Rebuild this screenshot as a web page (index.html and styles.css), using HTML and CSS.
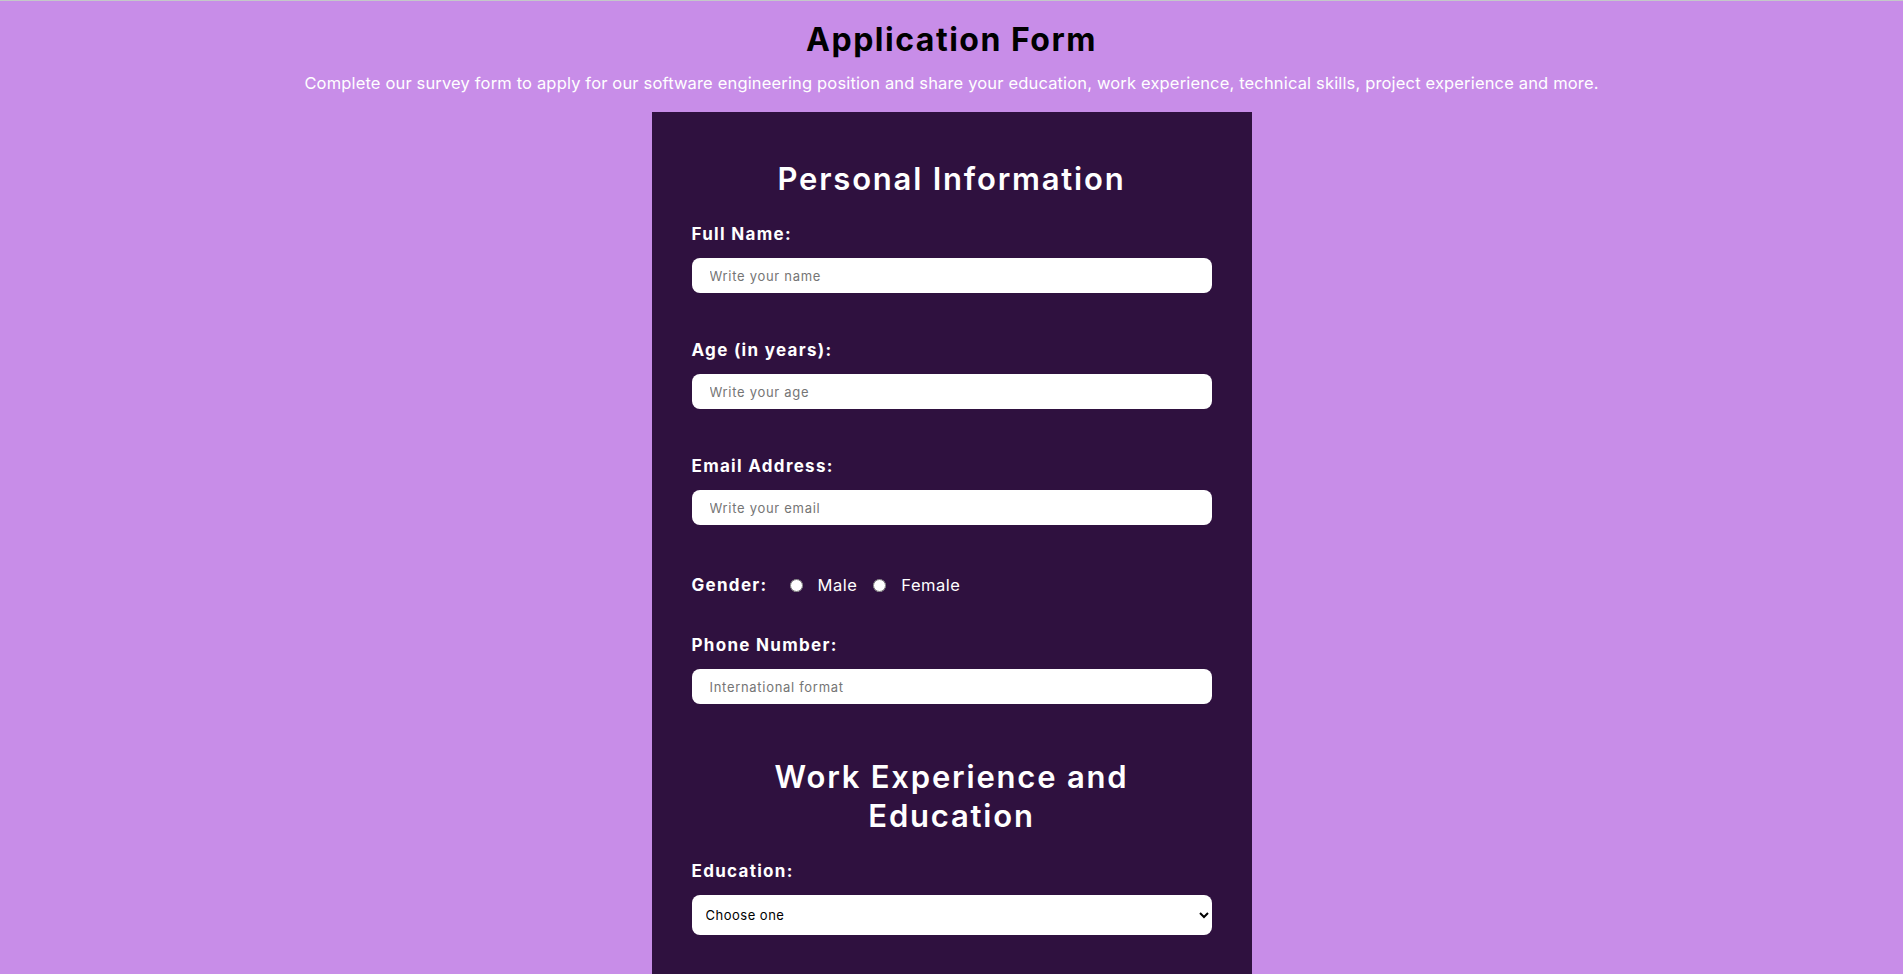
FILE: index.html
```html
<!DOCTYPE html>
<html lang="en">
<head>
<meta charset="utf-8">
<title>Application Form</title>
<link rel="stylesheet" href="styles.css">
</head>
<body>
<header class="page-header">
  <h1 class="title">Application Form</h1>
  <p class="subtitle">Complete our survey form to apply for our software engineering position and share your education, work experience, technical skills, project experience and more.</p>
</header>
<form class="card">
  <h2 class="section-title">Personal Information</h2>
  <div class="field">
    <label class="label" for="name">Full Name:</label>
    <input class="text-input" id="name" type="text" placeholder="Write your name">
  </div>
  <div class="field">
    <label class="label" for="age">Age (in years):</label>
    <input class="text-input" id="age" type="text" placeholder="Write your age">
  </div>
  <div class="field">
    <label class="label" for="email">Email Address:</label>
    <input class="text-input" id="email" type="text" placeholder="Write your email">
  </div>
  <div class="gender-row">
    <span class="label gender-label">Gender:</span>
    <input class="radio" type="radio" id="male" name="gender">
    <label class="option" for="male">Male</label>
    <input class="radio" type="radio" id="female" name="gender">
    <label class="option" for="female">Female</label>
  </div>
  <div class="field">
    <label class="label" for="phone">Phone Number:</label>
    <input class="text-input" id="phone" type="text" placeholder="International format">
  </div>
  <h2 class="section-title second">Work Experience and Education</h2>
  <div class="field">
    <label class="label" for="edu">Education:</label>
    <select class="select" id="edu">
      <option>Choose one</option>
      <option>High school</option>
      <option>Bachelor's degree</option>
      <option>Master's degree</option>
    </select>
  </div>
  <div class="field">
    <label class="label" for="years">Years of Experience:</label>
    <input class="text-input" id="years" type="text" placeholder="Write your years of experience">
  </div>
</form>
</body>
</html>
```
FILE: styles.css
```css
html, body {
  margin: 0;
  padding: 0;
}
body {
  background: #c88de8;
  border-top: 1px solid #c4c8c8;
  font-family: "Inter", "DejaVu Sans", sans-serif;
  color: #fff;
}
.page-header {
  text-align: center;
  padding-top: 19px;
}
.title {
  margin: 0;
  font-size: 32px;
  line-height: 40px;
  font-weight: 700;
  color: #000;
  letter-spacing: 1.5px;
}
.subtitle {
  margin: 11px 0 0;
  font-size: 16.5px;
  line-height: 24px;
  color: #fff;
  letter-spacing: 0.16px;
}
.card {
  width: 600px;
  box-sizing: border-box;
  margin: 17px auto 0;
  background: #2f113f;
  padding: 47px 40px 60px;
  display: flex;
  flex-direction: column;
}
.section-title {
  margin: 0 0 26px;
  font-size: 31px;
  line-height: 39px;
  font-weight: 600;
  text-align: center;
  color: #fff;
  letter-spacing: 1.8px;
}
.section-title.second {
  margin-top: 6px;
  padding: 0 20px;
}
.field {
  display: flex;
  flex-direction: column;
  gap: 14px;
  margin-bottom: 47px;
}
.label {
  font-size: 17px;
  line-height: 20px;
  font-weight: 700;
  color: #fff;
  letter-spacing: 1.3px;
}
.text-input {
  height: 35px;
  box-sizing: border-box;
  border: none;
  border-radius: 8px;
  padding: 0 18px;
  background: #fff;
  font-family: inherit;
  font-size: 13px;
  letter-spacing: 0.7px;
  color: #222;
  outline: none;
}
.text-input::placeholder {
  color: #757575;
}
.select {
  height: 40px;
  box-sizing: border-box;
  border: none;
  border-radius: 8px;
  padding: 0 10px;
  background: #fff;
  font-family: inherit;
  font-size: 13px;
  letter-spacing: 0.5px;
  color: #000;
}
.gender-row {
  display: flex;
  align-items: center;
  height: 20px;
  margin-top: 3px;
  margin-bottom: 40px;
}
.gender-label {
  margin-right: 22px;
}
.radio {
  width: 13px;
  height: 13px;
  margin: 0 15px 0 0;
}
.option {
  font-size: 16.5px;
  line-height: 20px;
  margin-right: 16px;
  letter-spacing: 0.5px;
  color: #fff;
}
```
